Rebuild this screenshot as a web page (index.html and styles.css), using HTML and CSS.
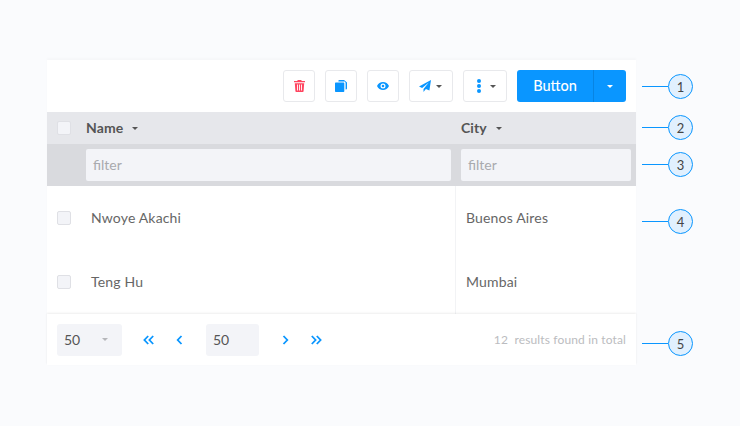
FILE: index.html
```html
<!DOCTYPE html>
<html lang="en">
<head>
  <meta charset="UTF-8" />
  <meta name="viewport" content="width=device-width, initial-scale=1.0" />
  <title>Table anatomy</title>
  <link rel="stylesheet" href="styles.css">
</head>
<body>
  <main class="stage">
    <section class="card">
      <div class="toolbar">
        <button class="tool">
          <svg width="11" height="12" viewBox="0 0 11 12"><path fill="#ff4560" d="M3.800 0h3.400l.6 1H11v1.300H0V1h3.200zM.8 3.200h9.400l-.6 7.800c0 .6-.5 1-1 1H2.400c-.5 0-1-.4-1-1zM3.100 4.600v6h.9v-6zm2 0v6h.9v-6zm2 0v6h.9v-6z"/></svg>
        </button>
        <button class="tool">
          <svg width="12" height="12" viewBox="0 0 12 12"><path fill="#0a96ff" d="M4.200 0h4.800L12 2.500V8.500c0 .5-.4.9-.9.9h-.5V3c0-.9-.7-1.500-1.500-1.500H3.400V.8c0-.5.3-.8.800-.8zM1 2.500h7.300c.6 0 1 .4 1 1V11c0 .6-.4 1-1 1H1c-.6 0-1-.4-1-1V3.500c0-.6.4-1 1-1z"/></svg>
        </button>
        <button class="tool">
          <svg width="12" height="8" viewBox="0 0 12 8"><path fill="#0a96ff" fill-rule="evenodd" d="M6 0c2.600 0 4.800 1.500 6 4-1.200 2.500-3.400 4-6 4S1.200 6.500 0 4c1.200-2.500 3.400-4 6-4zm0 1.500a2.500 2.500 0 1 0 0 5 2.500 2.500 0 0 0 0-5zm0 1.200a1.300 1.300 0 1 1 0 2.600 1.300 1.300 0 0 1 0-2.600z"/></svg>
        </button>
        <button class="tool tool-menu tool-send">
          <svg width="12" height="12" viewBox="0 0 12 12"><path fill="#0a96ff" d="M12 0 10.400 10.400 6.900 8.900 4.500 12V9.100L9.800 2.600 3.100 7.900 0 6.500z"/></svg>
          <span class="caret caret-dark"></span>
        </button>
        <button class="tool tool-menu tool-more">
          <svg width="4" height="14" viewBox="0 0 4 14"><g fill="#0a96ff"><circle cx="2" cy="2" r="2"/><circle cx="2" cy="7" r="2"/><circle cx="2" cy="12" r="2"/></g></svg>
          <span class="caret caret-dark"></span>
        </button>
        <div class="split">
          <button class="split-main">Button</button>
          <button class="split-side"><span class="caret caret-white"></span></button>
        </div>
      </div>

      <div class="row head">
        <div class="check-cell"><span class="check"></span></div>
        <div class="head-cell"><span class="head-label">Name</span> <span class="caret caret-dark"></span></div>
        <div class="head-cell"><span class="head-label">City</span> <span class="caret caret-dark"></span></div>
      </div>

      <div class="row filters">
        <div></div>
        <div class="filter">filter</div>
        <div class="filter filter-city">filter</div>
      </div>

      <div class="row body-row">
        <div class="check-cell"><span class="check"></span></div>
        <div class="cell">Nwoye Akachi</div>
        <div class="cell cell-city">Buenos Aires</div>
      </div>
      <div class="row body-row">
        <div class="check-cell"><span class="check"></span></div>
        <div class="cell">Teng Hu</div>
        <div class="cell cell-city">Mumbai</div>
      </div>

      <div class="pager">
        <div class="page-size">50 <span class="caret caret-grey"></span></div>
        <button class="page-btn page-first">
          <svg width="11" height="10" viewBox="0 0 11 10"><path fill="none" stroke="#0a96ff" stroke-width="1.800" d="M5.200 1 1.400 5l3.800 4M10.200 1 6.400 5l3.800 4"/></svg>
        </button>
        <button class="page-btn page-prev">
          <svg width="7" height="10" viewBox="0 0 7 10"><path fill="none" stroke="#0a96ff" stroke-width="1.800" d="M5.500 1 1.700 5l3.800 4"/></svg>
        </button>
        <div class="page-input">50</div>
        <button class="page-btn page-next">
          <svg width="7" height="10" viewBox="0 0 7 10"><path fill="none" stroke="#0a96ff" stroke-width="1.800" d="m1.500 1 3.800 4-3.800 4"/></svg>
        </button>
        <button class="page-btn page-last">
          <svg width="11" height="10" viewBox="0 0 11 10"><path fill="none" stroke="#0a96ff" stroke-width="1.800" d="m.8 1 3.800 4-3.800 4M5.800 1l3.800 4-3.800 4"/></svg>
        </button>
        <div class="total">12&nbsp; results found in total</div>
      </div>
    </section>

    <!-- callouts sit on the canvas beside the card -->
    <div class="callout callout-1"><span class="num">1</span></div>
    <div class="callout callout-2"><span class="num">2</span></div>
    <div class="callout callout-3"><span class="num">3</span></div>
    <div class="callout callout-4"><span class="num">4</span></div>
    <div class="callout callout-5"><span class="num">5</span></div>
  </main>
</body>
</html>
```

FILE: styles.css
```css
* {
  box-sizing: border-box;
}
body {
  margin: 0;
  background: #fafbfd;
  font-family: "Lato", "Noto Sans", sans-serif;
  color: #555;
}
button {
  font-family: inherit;
  padding: 0;
  cursor: pointer;
}
.stage {
  position: relative;
  width: 740px;
  height: 426px;
  padding: 60px 0 0 47px;
}
.card {
  width: 589px;
  height: 305px;
  background: #fff;
  box-shadow: 0 -2px 2px rgba(0,0,0,0.02);
}
.toolbar {
  height: 52px;
  display: flex;
  align-items: center;
  justify-content: flex-end;
  padding-right: 10px;
}
.tool {
  width: 32px;
  height: 32px;
  margin-right: 10px;
  display: flex;
  align-items: center;
  justify-content: center;
  background: #fff;
  border: 1px solid #e8e9ec;
  border-radius: 3px;
}
.tool-menu {
  width: 44px;
  justify-content: flex-start;
}
.tool-send {
  gap: 5px;
  padding-left: 9px;
}
.tool-more {
  gap: 9px;
  padding-left: 13px;
}
.caret {
  display: inline-block;
  width: 0;
  height: 0;
  border-left: 3px solid transparent;
  border-right: 3px solid transparent;
  border-top: 3.5px solid #555;
}
.caret-white {
  border-top-color: #fff;
}
.caret-grey {
  border-top-color: #b5b6ba;
}
.split {
  display: flex;
  height: 32px;
  border-radius: 3px;
  overflow: hidden;
  background: #0a96ff;
}
.split-main {
  width: 76px;
  border: 0;
  background: none;
  color: #fff;
  font-size: 14.5px;
  font-weight: 500;
  padding-bottom: 1px;
}
.split-side {
  width: 33px;
  display: flex;
  align-items: center;
  justify-content: center;
  border: 0;
  border-left: 1px solid #0884e2;
  background: none;
}
.row {
  display: grid;
  grid-template-columns: 39px 370px 180px;
}
.head {
  height: 32px;
  background: #e6e7eb;
}
.check-cell {
  display: flex;
  align-items: center;
  padding-left: 10px;
}
.check {
  width: 14px;
  height: 14px;
  background: #f3f4f8;
  border: 1px solid #dfe0e5;
  border-radius: 2px;
}
.head-cell {
  display: flex;
  align-items: center;
  gap: 9px;
  font-size: 14px;
  font-weight: 700;
  letter-spacing: 0.1px;
  color: #555;
}
.head-label {
  padding-bottom: 2px;
}
.head-cell:last-child {
  padding-left: 5px;
}
.filters {
  height: 42px;
  padding: 5px 0;
  background: #d9dade;
}
.filter {
  width: 365px;
  height: 32px;
  padding: 0 7px 2px;
  display: flex;
  align-items: center;
  background: #f3f4f8;
  border-radius: 2px;
  font-size: 14px;
  color: #a9aaae;
}
.filter-city {
  width: 170px;
  margin-left: 5px;
}
.body-row {
  height: 64px;
}
.cell {
  display: flex;
  align-items: center;
  padding: 0 0 2px 5px;
  font-size: 14px;
  letter-spacing: 0.17px;
  color: #666;
}
.cell-city {
  padding-left: 10px;
  margin-left: -1px;
  border-left: 1px solid #f2f3f5;
}
.pager {
  position: relative;
  height: 51px;
  display: flex;
  align-items: center;
  padding: 0 10px;
  background: #fff;
  box-shadow: 0 -1px 2px rgba(0,0,0,0.07);
  font-size: 14px;
}
.page-size {
  width: 65px;
  height: 32px;
  padding: 0 14px 0 7px;
  display: flex;
  align-items: center;
  justify-content: space-between;
  background: #f3f4f8;
  border-radius: 3px;
  color: #555;
}
.page-btn {
  display: flex;
  align-items: center;
  justify-content: center;
  border: 0;
  background: none;
}
.page-first {
  margin-left: 21px;
}
.page-prev {
  margin-left: 22px;
}
.page-input {
  width: 53px;
  height: 32px;
  margin-left: 23px;
  padding-left: 7px;
  display: flex;
  align-items: center;
  background: #f3f4f8;
  border-radius: 3px;
  color: #555;
}
.page-next {
  margin-left: 23px;
}
.page-last {
  margin-left: 22px;
}
.total {
  margin-left: auto;
  font-size: 12px;
  letter-spacing: 0.14px;
  color: #bbbcc0;
}
.callout {
  position: absolute;
  left: 642px;
  width: 51px;
  height: 25px;
  display: flex;
  align-items: center;
  justify-content: flex-end;
}
.callout::before {
  content: "";
  flex: 1;
  height: 1px;
  background: #0a96ff;
}
.num {
  width: 25px;
  height: 25px;
  display: flex;
  align-items: center;
  justify-content: center;
  background: #e1f0fe;
  border: 1px solid #0a96ff;
  border-radius: 50%;
  font-size: 13px;
  color: #444;
}
.callout-1 { top: 74px; }
.callout-2 { top: 115px; }
.callout-3 { top: 152px; }
.callout-4 { top: 209px; }
.callout-5 { top: 331px; }
```
